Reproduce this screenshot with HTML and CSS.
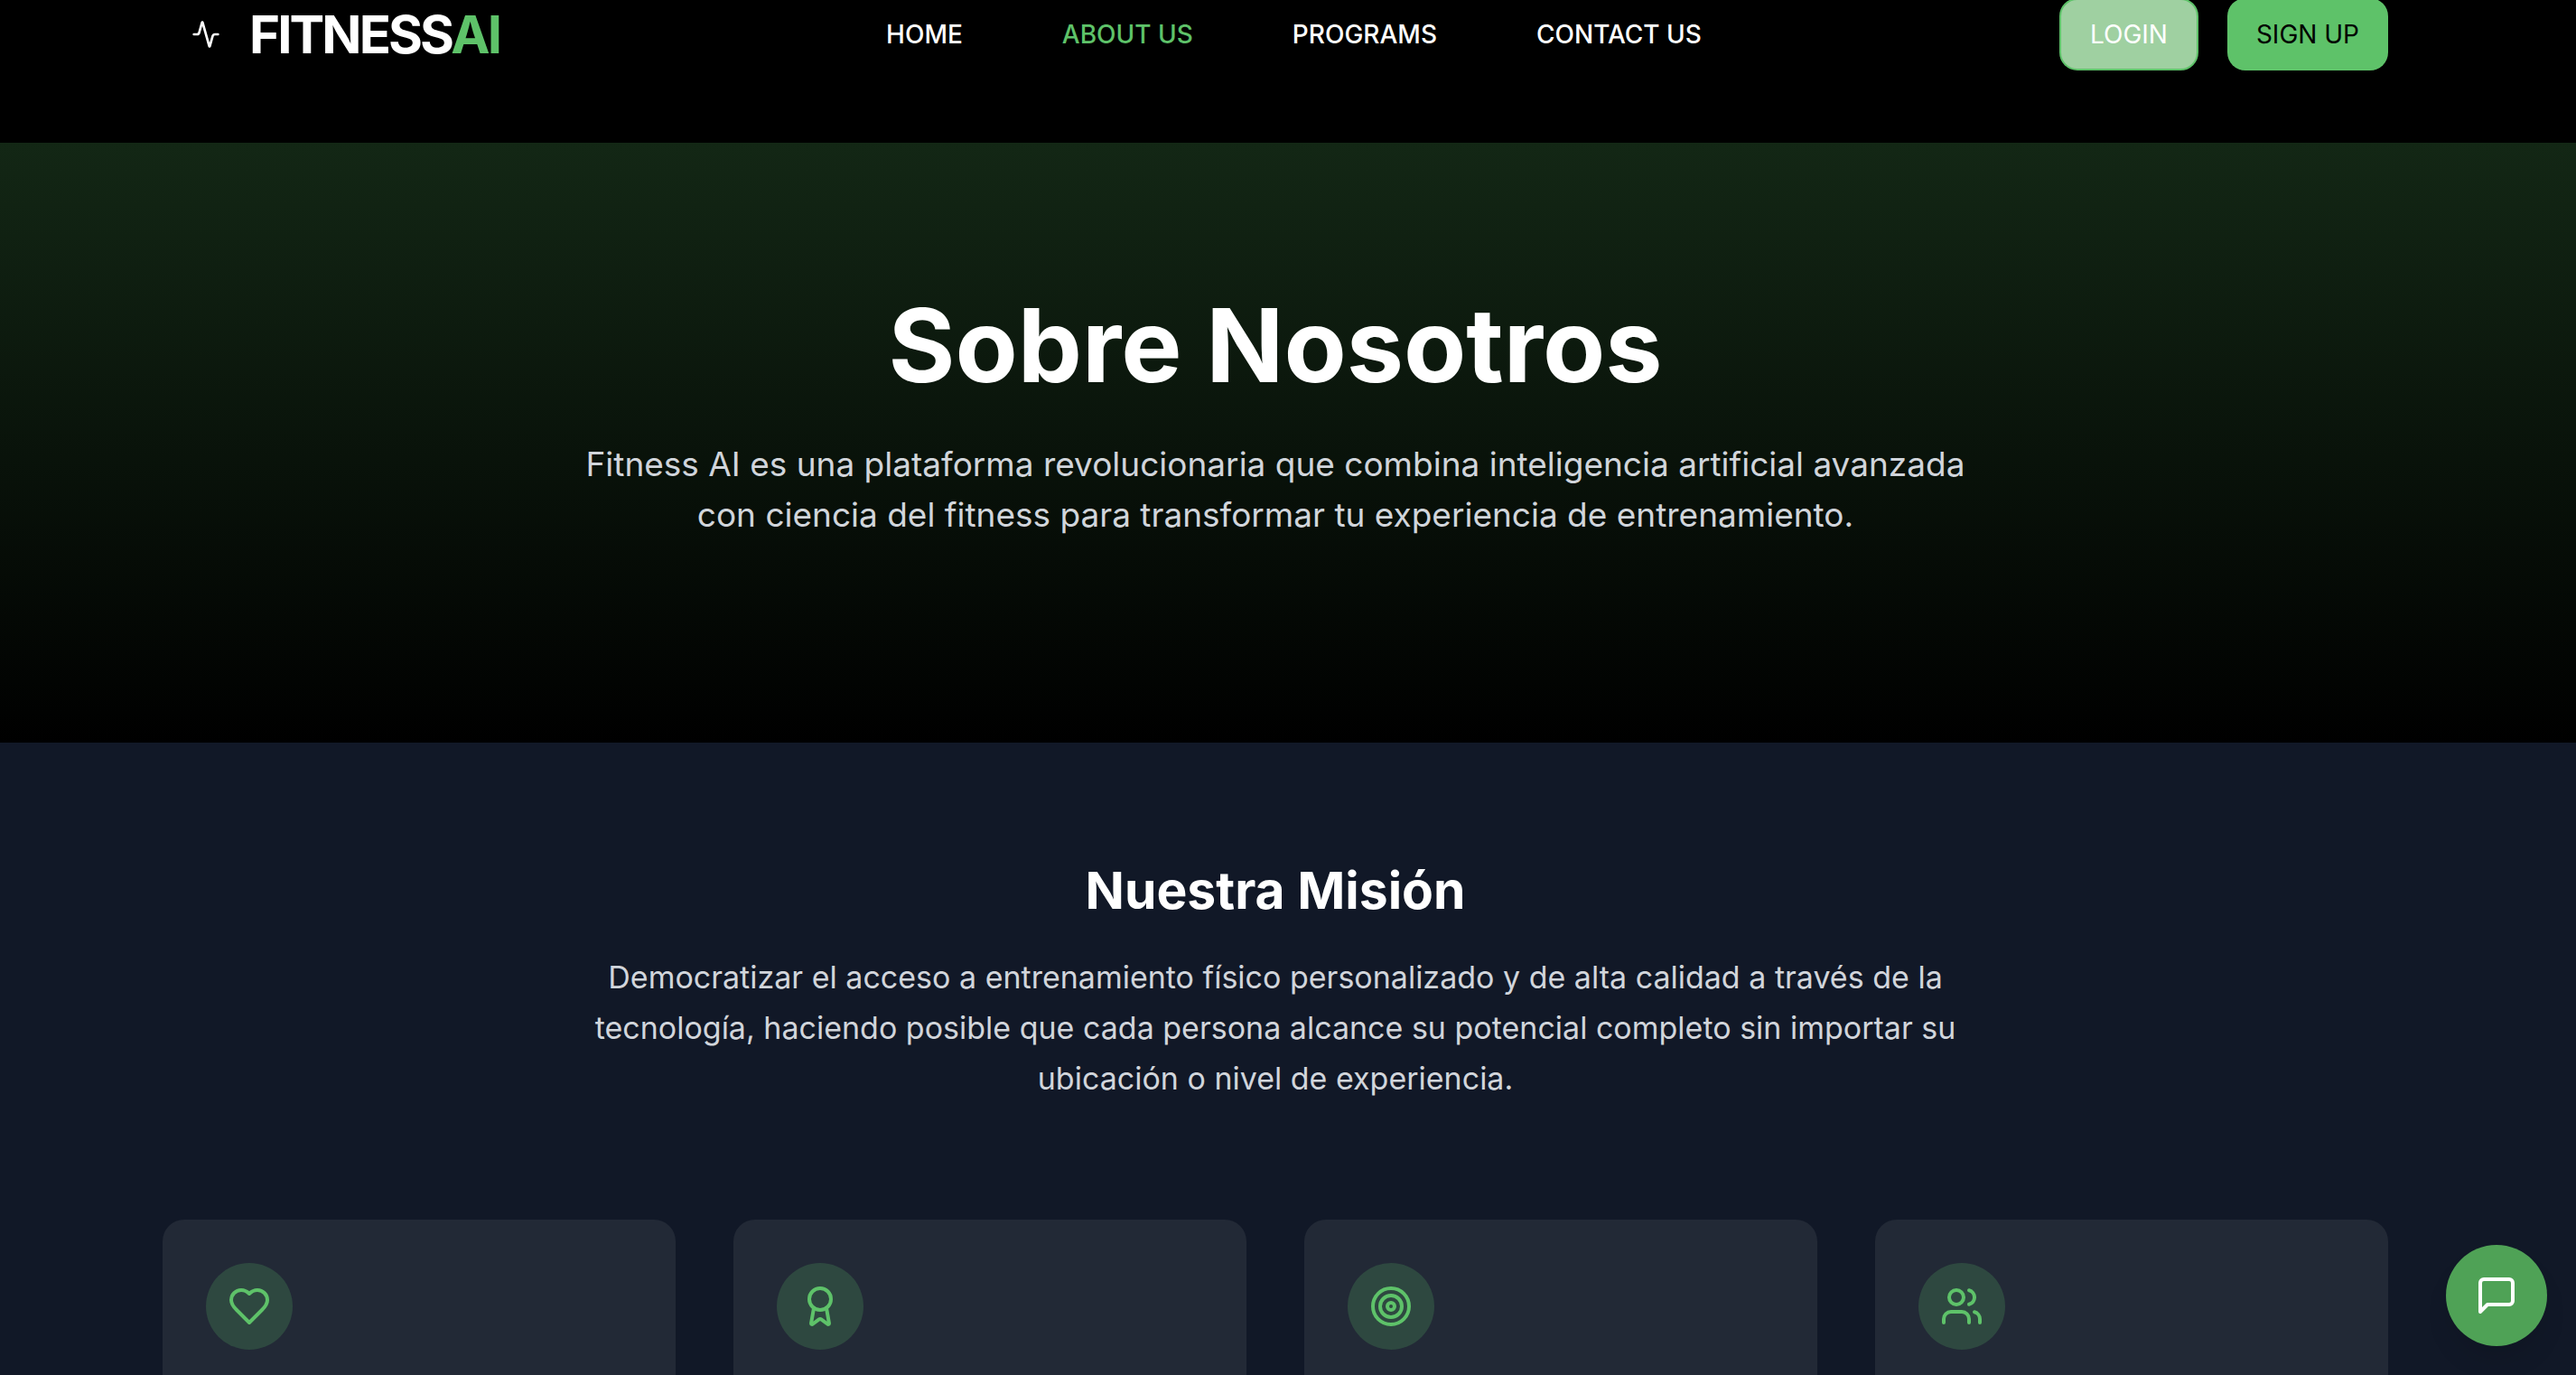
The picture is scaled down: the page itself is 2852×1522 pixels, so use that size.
FILE: index.html
```html
<!DOCTYPE html>
<html lang="es">
<head>
  <meta charset="utf-8">
  <meta name="viewport" content="width=device-width, initial-scale=1">
  <title>Fitness AI - Sobre Nosotros</title>
  <link rel="stylesheet" href="styles.css">
</head>
<body>
  <header class="header">
    <div class="container navbar">
      <a class="logo" href="#">
        <span class="logo-mark">
          <svg class="icon-small" viewBox="0 0 24 24" aria-hidden="true"><path d="M22 12h-2.48a2 2 0 0 0-1.93 1.46l-2.35 8.36a.25.25 0 0 1-.48 0L9.24 2.18a.25.25 0 0 0-.48 0l-2.35 8.36A2 2 0 0 1 4.49 12H2"/></svg>
        </span>
        <span class="logo-text">FITNESS<span class="accent">AI</span></span>
      </a>
      <nav class="links">
        <a href="#">HOME</a>
        <a class="accent" href="#">ABOUT US</a>
        <a href="#">PROGRAMS</a>
        <a href="#">CONTACT US</a>
      </nav>
      <div class="actions">
        <button class="btn btn-login" type="button">LOGIN</button>
        <button class="btn btn-signup" type="button">SIGN UP</button>
      </div>
    </div>
  </header>

  <main>
    <section class="hero">
      <div class="container">
        <h1>Sobre Nosotros</h1>
        <p>Fitness AI es una plataforma revolucionaria que combina inteligencia artificial avanzada con ciencia del fitness para transformar tu experiencia de entrenamiento.</p>
      </div>
    </section>

    <section class="mission">
      <div class="container">
        <h2>Nuestra Misión</h2>
        <p>Democratizar el acceso a entrenamiento físico personalizado y de alta calidad a través de la tecnología, haciendo posible que cada persona alcance su potencial completo sin importar su ubicación o nivel de experiencia.</p>
        <div class="cards">
          <article class="card">
            <span class="badge"><svg class="icon" viewBox="0 0 24 24" aria-hidden="true"><path d="M19 14c1.49-1.46 3-3.21 3-5.5A5.5 5.5 0 0 0 16.500 3c-1.760 0-3 .5-4.500 2-1.500-1.500-2.740-2-4.500-2A5.500 5.500 0 0 0 2 8.500c0 2.300 1.500 4.050 3 5.500l7 7Z"/></svg></span>
          </article>
          <article class="card">
            <span class="badge"><svg class="icon" viewBox="0 0 24 24" aria-hidden="true"><path d="m15.477 12.890 1.515 8.526a.5.5 0 0 1-.810.470l-3.580-2.687a1 1 0 0 0-1.197 0l-3.586 2.686a.5.5 0 0 1-.810-.469l1.514-8.526"/><circle cx="12" cy="8" r="6"/></svg></span>
          </article>
          <article class="card">
            <span class="badge"><svg class="icon" viewBox="0 0 24 24" aria-hidden="true"><circle cx="12" cy="12" r="10"/><circle cx="12" cy="12" r="6"/><circle cx="12" cy="12" r="2"/></svg></span>
          </article>
          <article class="card">
            <span class="badge"><svg class="icon" viewBox="0 0 24 24" aria-hidden="true"><path d="M16 21v-2a4 4 0 0 0-4-4H6a4 4 0 0 0-4 4v2"/><circle cx="9" cy="7" r="4"/><path d="M22 21v-2a4 4 0 0 0-3-3.870"/><path d="M16 3.130a4 4 0 0 1 0 7.750"/></svg></span>
          </article>
        </div>
      </div>
    </section>
  </main>

  <button class="chat" type="button" aria-label="Abrir chat">
    <svg class="icon" viewBox="0 0 24 24" aria-hidden="true"><path d="M21 15a2 2 0 0 1-2 2H7l-4 4V5a2 2 0 0 1 2-2h14a2 2 0 0 1 2 2z"/></svg>
  </button>
</body>
</html>
```
FILE: styles.css
```css
:root {
  --primary: #5ec269;
  --gutter: 28px;
}

* {
  box-sizing: border-box;
}

body {
  display: flex;
  flex-direction: column;
  margin: 0;
  height: 100vh;
  overflow: hidden;
  background: #000;
  color: #fff;
  font-family: Inter, "Liberation Sans", sans-serif;
}

main {
  display: flex;
  flex: 1;
  flex-direction: column;
}

h1, h2, p {
  margin: 0;
}

a {
  color: inherit;
  text-decoration: none;
}

svg {
  display: block;
  fill: none;
  stroke: currentColor;
  stroke-width: 2;
  stroke-linecap: round;
  stroke-linejoin: round;
}

.icon {
  width: 48px;
  height: 48px;
}

.icon-small {
  width: 32px;
  height: 32px;
  stroke-width: 2;
}

.accent {
  color: var(--primary);
}

.header,
.hero,
.mission {
  padding-right: var(--gutter);
}

.container {
  width: 100%;
  max-width: 2560px;
  margin: 0 auto;
  padding: 0 48px;
}

.header {
  padding-bottom: 82px;
  background: #000;
}

.navbar {
  display: flex;
  align-items: center;
  justify-content: space-between;
  height: 76px;
}

.logo {
  display: flex;
  align-items: center;
}

.logo-mark {
  display: flex;
  justify-content: center;
  width: 96px;
}

.logo-text {
  font-size: 58px;
  font-weight: 700;
  line-height: 72px;
  letter-spacing: -0.05em;
}

.links {
  display: flex;
  gap: 110px;
  margin-left: 32px;
  font-size: 28px;
  font-weight: 500;
  line-height: 40px;
}

.actions {
  display: flex;
  gap: 32px;
}

.btn {
  height: 80px;
  padding: 0 32px;
  border: 0;
  border-radius: 20px;
  background: var(--primary);
  font: 400 28px/40px Inter, "Liberation Sans", sans-serif;
}

.btn-login {
  border: 2px solid var(--primary);
  background: #9fd0a1;
  color: #fff;
}

.btn-signup {
  color: #000;
}

.hero {
  padding-top: 160px;
  padding-bottom: 224px;
  background: linear-gradient(#132715, #000);
  text-align: center;
}

.hero h1 {
  margin-bottom: 40px;
  font-size: 113px;
  font-weight: 700;
  line-height: 128px;
}

.hero p {
  max-width: 1536px;
  margin: 0 auto;
  color: #d1d5db;
  font-size: 37px;
  line-height: 56px;
}

.mission {
  display: flex;
  flex: 1;
  padding-top: 128px;
  background: #111827;
  text-align: center;
}

.mission .container {
  display: flex;
  flex-direction: column;
}

.mission h2 {
  margin-bottom: 32px;
  font-size: 57px;
  font-weight: 700;
  line-height: 72px;
}

.mission p {
  max-width: 1536px;
  margin: 0 auto 128px;
  color: #d1d5db;
  font-size: 34px;
  line-height: 56px;
}

.cards {
  display: grid;
  flex: 1;
  grid-template-columns: repeat(4, 1fr);
  gap: 64px;
}

.card {
  padding: 48px 48px 0;
  border-radius: 24px 24px 0 0;
  background: #222936;
}

.badge {
  display: flex;
  align-items: center;
  justify-content: center;
  width: 96px;
  height: 96px;
  border-radius: 50%;
  background: #2e4840;
  color: var(--primary);
}

.chat {
  position: fixed;
  right: 32px;
  bottom: 32px;
  padding: 32px;
  border: 0;
  border-radius: 50%;
  background: #4fa256;
  color: #fff;
  box-shadow: 0 20px 30px -6px rgba(0, 0, 0, 0.1);
}
```
